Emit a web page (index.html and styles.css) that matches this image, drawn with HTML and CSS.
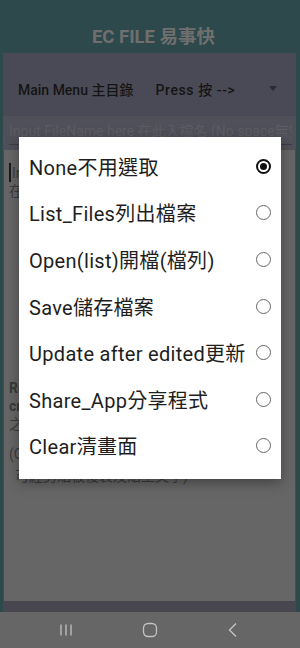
FILE: index.html
```html
<!DOCTYPE html>
<html>
<head>
<meta charset="utf-8">
<link rel="stylesheet" href="styles.css">
</head>
<body>
<div class="screen">
  <header class="titlebar">EC FILE 易事快</header>
  <main class="panel">
    <div class="menu-row">
      <span class="menu-label">Main Menu 主目錄</span>
      <span class="menu-press">Press 按 --&gt;</span>
      <span class="caret"></span>
    </div>
    <div class="input-wrap">
      <div class="input-text">Input FileName here 在此入檔名 (No space無空格)</div>
    </div>
    <div class="editor">
      <p class="line first"><span class="cursor"></span>Input or paste text here</p>
      <p class="line">在此輸入或貼上文字</p>
      <p class="line gap-big bold">Remarks: saved files are kept</p>
      <p class="line bold">created in app folder</p>
      <p class="line">之後可開啟及更新檔案內容</p>
      <p class="line gap">(Copy and paste by clipboard</p>
      <p class="line indent">可經剪貼板複製及貼上文字)</p>
    </div>
    <div class="panel-foot"></div>
  </main>
  <nav class="navbar">
    <svg class="nav-icon" width="14" height="14" viewBox="0 0 14 14"><path d="M2 1.5v11M7 1.5v11M12 1.5v11" stroke="#c2c2c2" stroke-width="1.3" fill="none"/></svg>
    <svg class="nav-icon" width="16" height="16" viewBox="0 0 16 16"><rect x="1.5" y="1.5" width="13" height="13" rx="4.5" stroke="#c2c2c2" stroke-width="1.3" fill="none"/></svg>
    <svg class="nav-icon" width="14" height="16" viewBox="0 0 14 16"><path d="M10 1.5L3.5 8L10 14.5" stroke="#c2c2c2" stroke-width="1.4" fill="none"/></svg>
  </nav>

  <div class="dialog">
    <div class="opt"><span class="opt-label">None不用選取</span><span class="radio checked"></span></div>
    <div class="opt"><span class="opt-label">List_Files列出檔案</span><span class="radio"></span></div>
    <div class="opt"><span class="opt-label">Open(list)開檔(檔列)</span><span class="radio"></span></div>
    <div class="opt"><span class="opt-label">Save儲存檔案</span><span class="radio"></span></div>
    <div class="opt"><span class="opt-label">Update after edited更新</span><span class="radio"></span></div>
    <div class="opt"><span class="opt-label">Share_App分享程式</span><span class="radio"></span></div>
    <div class="opt"><span class="opt-label">Clear清畫面</span><span class="radio"></span></div>
  </div>
</div>
</body>
</html>
```

FILE: styles.css
```css
* { box-sizing: border-box; }
html, body { margin: 0; padding: 0; }
body {
  width: 300px;
  height: 648px;
  overflow: hidden;
  font-family: Roboto, "Noto Sans CJK TC", sans-serif;
  background: #2e494c;
}
.screen {
  position: relative;
  width: 300px;
  height: 648px;
  display: flex;
  flex-direction: column;
}
.titlebar {
  height: 53px;
  flex: none;
  display: flex;
  align-items: flex-end;
  justify-content: center;
  padding: 0 0 5px 7px;
  color: #6f6f6f;
  font-weight: 700;
  font-size: 18.5px;
  line-height: 22px;
}
.panel {
  flex: 1;
  margin: 0 4px 0 3px;
  background: #4a4a56;
  display: flex;
  flex-direction: column;
  min-height: 0;
}
.menu-row {
  height: 63px;
  flex: none;
  display: flex;
  align-items: center;
  padding: 8px 0 0 15px;
  font-size: 14px;
  font-weight: 500;
  color: #151515;
}
.menu-press { margin-left: 22px; letter-spacing: 0.6px; }
.caret {
  margin-left: auto;
  margin-right: 19px;
  width: 0; height: 0;
  border-left: 4px solid transparent;
  border-right: 4px solid transparent;
  border-top: 5px solid #2a2a30;
}
.input-wrap {
  height: 34px;
  flex: none;
  background: #50505a;
  padding: 6px 1px 0 6px;
  overflow: hidden;
}
.input-text {
  white-space: nowrap;
  overflow: hidden;
  font-size: 14px;
  line-height: 18px;
  color: #5c5c64;
  border-bottom: 1px solid #3c3c44;
  padding-bottom: 4px;
  width: 283px;
}
.editor {
  flex: 1;
  background: #666666;
  margin: 0 1px 0 1px;
  padding: 13px 6px 0 5px;
  color: #3c3c3c;
  font-size: 14px;
  line-height: 18px;
  overflow: hidden;
}
.line { margin: 0; white-space: nowrap; }
.cursor {
  display: inline-block;
  width: 2px;
  height: 19px;
  background: #1a1a1a;
  vertical-align: -4px;
  margin-right: 1px;
}
.gap-big { margin-top: 179px; }
.bold { font-weight: 700; color: #3a3a3a; }
.gap { margin-top: 12px; }
.indent { padding-left: 6px; margin-top: 4px; }
.panel-foot {
  height: 11px;
  flex: none;
  background: #48474f;
}
.navbar {
  height: 36px;
  flex: none;
  background: #666666;
  display: flex;
  align-items: center;
  justify-content: space-between;
  padding: 0 60px 0 59px;
}
.nav-icon { display: block; }
.dialog {
  position: absolute;
  left: 19px;
  top: 137px;
  width: 262px;
  background: #ffffff;
  padding: 6px 0 10px;
  box-shadow: 0 4px 12px rgba(0,0,0,0.35);
}
.opt {
  height: 46.6px;
  display: flex;
  align-items: center;
  padding: 0 10px 0 10px;
}
.opt-label {
  flex: 1;
  font-size: 20px;
  letter-spacing: 0.3px;
  color: #1e1e1e;
  white-space: nowrap;
}
.radio {
  width: 15px;
  height: 15px;
  border-radius: 50%;
  border: 1.4px solid #666;
  flex: none;
}
.radio.checked {
  border: 2px solid #111;
  position: relative;
}
.radio.checked::after {
  content: "";
  position: absolute;
  left: 50%; top: 50%;
  width: 7px; height: 7px;
  margin: -3.5px 0 0 -3.5px;
  border-radius: 50%;
  background: #111;
}
```
